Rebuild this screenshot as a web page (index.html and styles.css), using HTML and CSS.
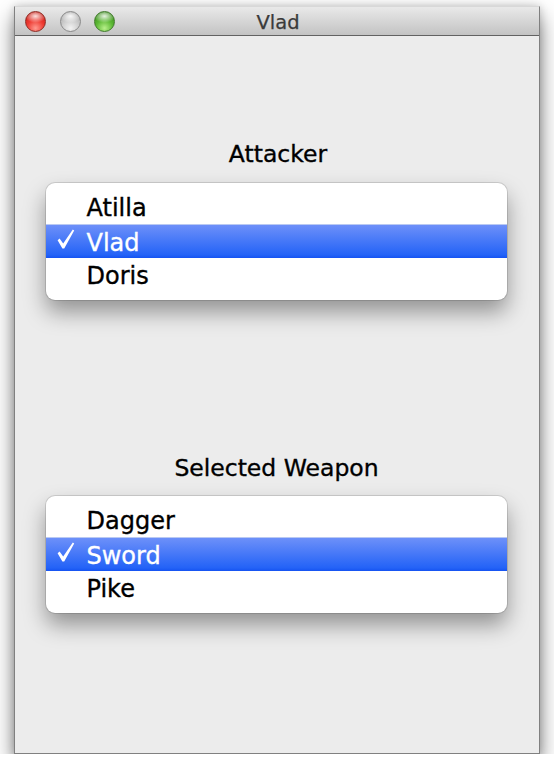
FILE: index.html
```html
<!DOCTYPE html>
<html>
<head>
<meta charset="utf-8">
<link rel="stylesheet" href="styles.css">
</head>
<body>
<div class="window">
  <div class="titlebar">
    <div class="lights">
      <span class="light red"></span>
      <span class="light gray"></span>
      <span class="light green"></span>
    </div>
    <div class="title">Vlad</div>
  </div>
  <div class="content">
    <div class="heading">Attacker</div>
    <ul class="menu">
      <li class="item"><span class="check"></span><span class="label">Atilla</span></li>
      <li class="item selected"><span class="check"><svg class="tick" viewBox="0 0 18 20" width="18" height="20"><path d="M0.6 11.2 L2.6 9.6 L6.2 14.6 L15.8 0.4 L17.2 1.4 L7.2 19.4 L5.4 19.4 Z"/></svg></span><span class="label">Vlad</span></li>
      <li class="item"><span class="check"></span><span class="label">Doris</span></li>
    </ul>
    <div class="heading second">Selected Weapon</div>
    <ul class="menu">
      <li class="item"><span class="check"></span><span class="label">Dagger</span></li>
      <li class="item selected"><span class="check"><svg class="tick" viewBox="0 0 18 20" width="18" height="20"><path d="M0.6 11.2 L2.6 9.6 L6.2 14.6 L15.8 0.4 L17.2 1.4 L7.2 19.4 L5.4 19.4 Z"/></svg></span><span class="label">Sword</span></li>
      <li class="item"><span class="check"></span><span class="label">Pike</span></li>
    </ul>
  </div>
</div>
</body>
</html>
```
FILE: styles.css
```css
html, body {
  margin: 0;
  padding: 0;
  background: #ffffff;
}
body {
  padding: 6px 0 0 14px;
  font-family: "DejaVu Sans", "Liberation Sans", sans-serif;
}
.window {
  width: 526px;
  height: 748px;
  box-sizing: border-box;
  background: #ececec;
  border: 1px solid #808080;
  border-top-color: #d8d8d8;
  box-shadow: 0 11px 20px rgba(0,0,0,0.5), 0 0 8px rgba(0,0,0,0.18);
  display: flex;
  flex-direction: column;
}
.titlebar {
  height: 28px;
  border-bottom: 1px solid #626262;
  background: linear-gradient(#e9e9e9, #c3c3c3);
  display: flex;
  align-items: center;
  position: relative;
}
.lights {
  display: flex;
  gap: 13.5px;
  padding-left: 10px;
  padding-top: 1px;
}
.light {
  width: 21px;
  height: 21px;
  border-radius: 50%;
  box-sizing: border-box;
  display: block;
}
.red {
  background:
    radial-gradient(ellipse 55% 35% at 50% 22%, rgba(255,255,255,0.85), rgba(255,255,255,0) 100%),
    radial-gradient(circle at 50% 85%, #ff9a90 0%, #ee3b32 45%, #b8120c 100%);
  border: 1px solid #8e2a22;
}
.gray {
  background:
    radial-gradient(ellipse 55% 35% at 50% 22%, rgba(255,255,255,0.9), rgba(255,255,255,0) 100%),
    radial-gradient(circle at 50% 85%, #f2f2f2 0%, #cdcdcd 45%, #9c9c9c 100%);
  border: 1px solid #8a8a8a;
}
.green {
  background:
    radial-gradient(ellipse 55% 35% at 50% 22%, rgba(255,255,255,0.85), rgba(255,255,255,0) 100%),
    radial-gradient(circle at 50% 85%, #b8f08a 0%, #5cb834 45%, #2f7a16 100%);
  border: 1px solid #3f7a2a;
}
.title {
  position: absolute;
  left: 0;
  right: 0;
  top: 3px;
  text-align: center;
  font-size: 19.5px;
  line-height: 26px;
  color: #3a3a3a;
  padding-left: 2px;
  -webkit-text-stroke: 0.25px #3a3a3a;
}
.content {
  padding: 104px 32px 0 31px;
}
.heading {
  text-align: center;
  font-size: 23.5px;
  line-height: 28px;
  color: #000;
  margin-bottom: 15px;
  padding-left: 3px;
  -webkit-text-stroke: 0.35px #000;
}
.heading.second {
  margin-top: 154px;
  margin-bottom: 14px;
  padding-left: 0;
}
.menu {
  list-style: none;
  margin: 0;
  padding: 7px 0 8px;
  background: #ffffff;
  border-radius: 9px;
  box-shadow: 0 0 0 1px rgba(0,0,0,0.12), 0 12px 22px rgba(0,0,0,0.38);
}
.item {
  height: 34px;
  line-height: 34px;
  padding-top: 2px;
  font-size: 24px;
  color: #000;
  display: flex;
  align-items: center;
  padding-left: 11px;
  box-sizing: border-box;
  -webkit-text-stroke: 0.35px #000;
}
.item.selected {
  color: #ffffff;
  background: linear-gradient(#6d90f9, #2463f7 90%, #1553f2);
  border-top: 1px solid #b9c9f3;
  -webkit-text-stroke: 0.35px #fff;
}
.check {
  width: 29.5px;
  height: 34px;
  flex: none;
  display: flex;
  align-items: flex-start;
}
.tick {
  display: block;
  margin-top: 3px;
  fill: #ffffff;
}
.label {
  white-space: nowrap;
}
```
